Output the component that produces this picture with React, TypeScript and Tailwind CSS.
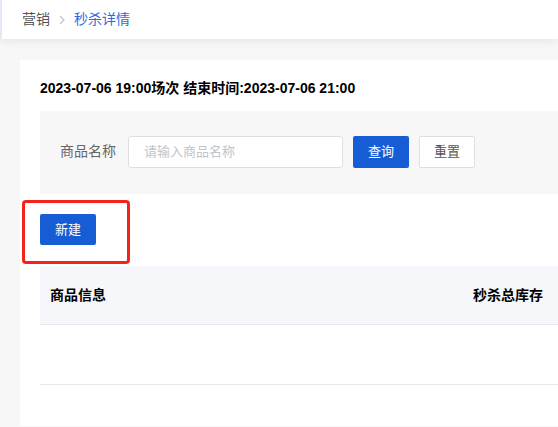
import React from "react";

const font = { fontFamily: '"Liberation Sans", "Noto Sans CJK SC", sans-serif' };

export default function App() {
    return (
        <div style={font} className="w-full h-[427px] overflow-hidden bg-[#f7f7f8] text-[14px]">
            <div className="h-[39px] bg-white border-l-2 border-[#e3e9f5] shadow-[0_2px_8px_rgba(0,0,0,0.08)] flex items-center pl-[20px] relative z-10">
                <span className="text-[#555]">营销</span>
                <svg width="14" height="14" viewBox="0 0 14 14" className="mx-[5px]">
                    <path d="M5 3l4 4-4 4" fill="none" stroke="#c0c4cc" strokeWidth="1.2" />
                </svg>
                <span className="text-[#2f6bdb]">秒杀详情</span>
            </div>
            <div className="ml-[20px] mt-[21px] w-[760px] h-[366px] bg-white">
                <div className="pl-[20px] pt-[18px] h-[51px] font-bold text-black text-[14px] leading-[20px]">
                    2023-07-06 19:00场次 结束时间:2023-07-06 21:00
                </div>
                <div className="ml-[20px] bg-[#f7f7f8] h-[83px] flex items-center pl-[20px] pb-[2px]">
                    <span className="text-[#666] mr-[12px]">商品名称</span>
                    <div className="w-[215px] h-[32px] bg-white border border-[#dcdfe6] rounded-[3px] flex items-center pl-[15px] text-[13px] text-[#c0c4cc]">
                        请输入商品名称
                    </div>
                    <button className="ml-[10px] w-[56px] h-[32px] bg-[#165dd5] text-white text-[13px] rounded-[2px]">查询</button>
                    <button className="ml-[10px] w-[56px] h-[32px] bg-white border border-[#dcdfe6] text-[#555] text-[13px] rounded-[2px]">重置</button>
                </div>
                <div className="relative pl-[20px] pt-[20px] h-[72px]">
                    <button className="w-[56px] h-[31px] bg-[#165dd5] text-white text-[13px] rounded-[2px]">新建</button>
                    <div className="absolute left-[2px] top-[6px] w-[108px] h-[64px] border-[3px] border-[#f5231c] rounded-[4px]"></div>
                </div>
                <div className="ml-[20px]">
                    <div className="grid grid-cols-[423px_1fr] h-[59px] bg-[#f5f7fa] border-b border-[#e4e7ed] items-center font-bold text-black">
                        <div className="pl-[10px]">商品信息</div>
                        <div className="pl-[10px]">秒杀总库存</div>
                    </div>
                    <div className="h-[60px] border-b border-[#e8e8ee]"></div>
                </div>
            </div>
        </div>
    );
}
